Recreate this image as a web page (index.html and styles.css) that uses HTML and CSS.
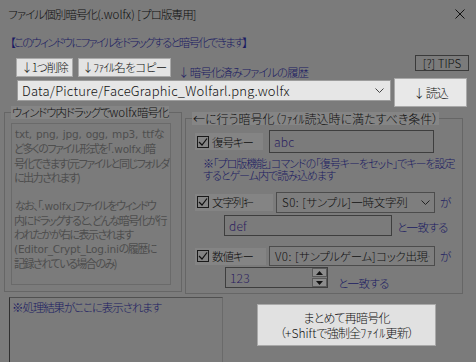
FILE: index.html
```html
<!DOCTYPE html>
<html lang="ja">
<head>
    <meta charset="UTF-8">
    <title>ファイル個別暗号化(.wolfx)</title>
    <link rel="stylesheet" href="styles.css">
</head>
<body>
    <div class="titlebar">
        <span class="title">ファイル個別暗号化<span class="lat">(.wolfx) [</span>プロ版専用<span class="lat">]</span></span>
        <svg class="close" width="10" height="10" viewBox="0 0 10 10"><path d="M0.5 0.5 L9.5 9.5 M9.5 0.5 L0.5 9.5" stroke="#111" stroke-width="1"/></svg>
    </div>

    <div class="notice">【このウィンドウにファイルをドラッグすると暗号化できます】</div>

    <div class="toolbar">
        <button class="btn btn-small">↓1つ削除</button>
        <button class="btn btn-copy">↓ﾌｧｲﾙ名をコピー</button>
        <span class="history-label">↓ 暗号化済みファイルの履歴</span>
        <button class="btn-tips">[?] TIPS</button>
    </div>

    <div class="path-row">
        <div class="combo combo-light">
            <span class="path">Data/Picture/FaceGraphic_Wolfarl.png.wolfx</span>
            <svg width="9" height="5" viewBox="0 0 9 5"><path d="M0.5 0.5 L4.5 4.5 L8.5 0.5" fill="none" stroke="#444"/></svg>
        </div>
        <button class="btn btn-load">↓ 読込</button>
    </div>

    <div class="main">
        <div class="group group-left">
            <div class="group-title">ウィンドウ内ドラッグで<span class="lat">wolfx</span>暗号化</div>
            <div class="help-box"> <span class="en">txt, png, jpg, ogg, mp3, ttf</span>な
ど多くのファイル形式を「<span class="en">.wolfx</span>」暗
号化できます(元ファイルと同じフォルダ
に出力されます)

 なお、「<span class="en">.wolfx</span>」ファイルをウィンドウ
内にドラッグすると、どんな暗号化が行
われたかが右に表示されます
<span class="en">(Editor_Crypt_Log.ini</span>の履歴に
記録されている場合のみ)</div>
        </div>

        <div class="group group-right">
            <div class="group-title group-title-wide">←に行う暗号化（ﾌｧｲﾙ読込時に満たすべき条件）</div>

            <div class="row row-key">
                <label class="check check-key"><span class="box"><svg width="10" height="10" viewBox="0 0 10 10"><path d="M1 5 L4 8 L9 1.5" fill="none" stroke="#111" stroke-width="1.2"/></svg></span>復号キー</label>
                <div class="field field-key">abc</div>
            </div>
            <div class="note">※「プロ版機能」コマンドの「復号キーをセット」でキーを設定<br>するとゲーム内で読み込めます</div>

            <div class="row row-str">
                <label class="check check-str"><span class="box"><svg width="10" height="10" viewBox="0 0 10 10"><path d="M1 5 L4 8 L9 1.5" fill="none" stroke="#111" stroke-width="1.2"/></svg></span>文字列ｷｰ</label>
                <div class="combo combo-dark combo-str">
                    <span><span class="lat">S0: [</span>サンプル<span class="lat">]</span>一時文字列</span>
                    <svg width="9" height="5" viewBox="0 0 9 5"><path d="M0.5 0.5 L4.5 4.5 L8.5 0.5" fill="none" stroke="#222"/></svg>
                </div>
                <span class="ga">が</span>
            </div>
            <div class="row row-match">
                <div class="field field-str">def</div>
                <span class="match">と一致する</span>
            </div>

            <div class="row row-num">
                <label class="check check-num"><span class="box"><svg width="10" height="10" viewBox="0 0 10 10"><path d="M1 5 L4 8 L9 1.5" fill="none" stroke="#111" stroke-width="1.2"/></svg></span>数値キー</label>
                <div class="combo combo-dark combo-num">
                    <span><span class="lat">V0: [</span>サンプルゲーム<span class="lat">]</span>コック出現</span>
                    <svg width="9" height="5" viewBox="0 0 9 5"><path d="M0.5 0.5 L4.5 4.5 L8.5 0.5" fill="none" stroke="#222"/></svg>
                </div>
                <span class="ga">が</span>
            </div>
            <div class="row row-spin">
                <div class="spinner">
                    <span class="spin-value">123</span>
                    <div class="spin-btns">
                        <span class="spin-btn"><svg width="7" height="4" viewBox="0 0 7 4"><path d="M3.5 0 L7 4 L0 4 Z" fill="#111"/></svg></span>
                        <span class="spin-btn"><svg width="7" height="4" viewBox="0 0 7 4"><path d="M0 0 L7 0 L3.5 4 Z" fill="#111"/></svg></span>
                    </div>
                </div>
                <span class="match match-num">と一致する</span>
            </div>
        </div>
    </div>

    <div class="bottom">
        <div class="result">※処理結果がここに表示されます</div>
        <button class="btn btn-big"><span class="big-line">まとめて再暗号化</span><span class="big-line">（<span class="lat">+Shift</span>で強制全<span class="kana">ﾌｧｲﾙ</span>更新）</span></button>
    </div>
</body>
</html>
```

FILE: styles.css
```css
body {
    margin: 0;
    width: 476px;
    height: 362px;
    overflow: hidden;
    background: #7b7b7b;
    font-family: "Noto Sans CJK JP", "Noto Sans", sans-serif;
    font-size: 11.5px;
    font-weight: 300;
    letter-spacing: -1.1px;
    font-feature-settings: "palt";
    color: #0e0e0e;
    white-space: nowrap;
}

.lat {
    letter-spacing: 0;
}

.kana {
    letter-spacing: 0.3px;
}

.titlebar {
    display: flex;
    justify-content: space-between;
    align-items: center;
    height: 28px;
    padding: 0 11px 0 8px;
}

.title {
    letter-spacing: -0.9px;
}

.notice {
    color: #1a1a62;
    margin: 7px 0 0 10px;
    height: 14px;
    line-height: 14px;
    letter-spacing: -1.8px;
}

.toolbar {
    display: flex;
    align-items: flex-start;
    height: 23px;
    margin-top: 6px;
    padding-left: 16px;
}

.btn {
    font-family: inherit;
    font-size: 11.5px;
    font-weight: 300;
    letter-spacing: -1px;
    font-feature-settings: "palt";
    color: #111;
    background: #e3e3e3;
    border: 1px solid #a9a9a9;
    padding: 0;
    margin: 0;
    white-space: nowrap;
}

.btn-small {
    width: 57px;
    height: 19px;
    margin-top: 3px;
    line-height: 17px;
}

.btn-copy {
    width: 93px;
    height: 19px;
    margin-top: 3px;
    margin-left: 5px;
    line-height: 17px;
    letter-spacing: -0.5px;
}

.history-label {
    color: #1a1a62;
    margin: 10px 0 0 7px;
    line-height: 14px;
}

.btn-tips {
    margin-left: auto;
    margin-right: 7px;
    width: 54px;
    height: 16px;
    padding: 0;
    font-family: inherit;
    font-size: 11.5px;
    font-weight: 300;
    line-height: 14px;
    color: #111;
    background: #7b7b7b;
    border: 1px solid #3a3a3a;
}

.path-row {
    display: flex;
    align-items: flex-start;
    height: 29px;
    padding-left: 17px;
}

.combo {
    display: flex;
    justify-content: space-between;
    align-items: center;
    box-sizing: border-box;
    padding: 0 6px 0 4px;
}

.combo-light {
    width: 374px;
    height: 21px;
    margin-top: 2px;
    background: #e6e6e6;
    border: 1px solid #9c9c9c;
}

.path {
    font-size: 13px;
    letter-spacing: 0.2px;
    color: #111;
}

.btn-load {
    width: 73px;
    height: 29px;
    margin-left: 3px;
    background: #e8e8e8;
    font-size: 12px;
}

.main {
    display: flex;
    align-items: flex-start;
    gap: 3px;
    padding-left: 4px;
    height: 187px;
}

/* group boxes: the border runs through the middle of the title */
.group {
    box-sizing: border-box;
    border: 1px solid #666;
}

.group-title {
    width: max-content;
    margin: -7px 0 0 6px;
    padding: 0 1px;
    line-height: 13px;
    background: #858585;
}

.group-right .group-title-wide {
    font-size: 12px;
    letter-spacing: 0;
}

.group-left {
    width: 178px;
    height: 180px;
    margin-top: 5px;
}

.help-box {
    box-sizing: border-box;
    width: 160px;
    height: 162px;
    margin: 4px 0 0 6px;
    padding: 2px 0 0 2px;
    border: 1px solid #6a6a6a;
    color: #4e4e4e;
    font-size: 11px;
    font-weight: 400;
    line-height: 14px;
    letter-spacing: -1.5px;
    white-space: pre;
    overflow: hidden;
}

.help-box .en {
    font-family: "DejaVu Sans", sans-serif;
    font-size: 10.5px;
    letter-spacing: -0.2px;
    word-spacing: 1px;
}

.group-right {
    width: 278px;
    height: 176px;
    margin-top: 11px;
}

.row {
    display: flex;
    align-items: center;
}

.row-key {
    margin-top: 5px;
    padding-left: 9px;
    height: 23px;
}

.check {
    display: flex;
    align-items: center;
    height: 17px;
    padding-left: 2px;
    background: #848484;
    box-sizing: border-box;
}

.box {
    display: flex;
    align-items: center;
    justify-content: center;
    width: 12px;
    height: 12px;
    box-sizing: border-box;
    border: 1px solid #1a1a1a;
    margin-right: 3px;
}

.check-key {
    width: 68px;
}

.check-str {
    width: 78px;
}

.check-num {
    width: 71px;
}

.field {
    box-sizing: border-box;
    border: 1px solid #3e3e3e;
    color: #2c2260;
    padding-left: 4px;
    display: flex;
    align-items: center;
    font-size: 12px;
    letter-spacing: 0.2px;
}

.field-key {
    width: 165px;
    height: 23px;
    margin-left: 6px;
}

.note {
    color: #1a1a62;
    margin: 4px 0 0 17px;
    font-size: 11px;
    line-height: 12px;
    letter-spacing: -1px;
}

.row-str {
    margin-top: 10px;
    padding-left: 9px;
    height: 22px;
}

.combo-dark {
    height: 21px;
    background: #7e7e7e;
    border: 1px solid #4c4c4c;
    padding: 0 4px 0 5px;
    color: #111;
    letter-spacing: -0.3px;
}

.combo-dark .lat {
    letter-spacing: 0.5px;
}

.combo-str {
    width: 159px;
    margin-left: 3px;
}

.ga {
    color: #1a1a62;
    margin-left: 5px;
}

.row-match {
    padding-left: 38px;
    height: 22px;
    margin-top: 1px;
}

.field-str {
    width: 168px;
    height: 21px;
}

.match {
    color: #1a1a62;
    margin-left: 5px;
    margin-top: 3px;
    letter-spacing: -0.6px;
}

.row-num {
    margin-top: 10px;
    padding-left: 9px;
    height: 20px;
}

.combo-num {
    width: 166px;
    height: 20px;
    margin-left: 3px;
}

.row-spin {
    padding-left: 39px;
    height: 21px;
    margin-top: 1px;
}

.spinner {
    display: flex;
    justify-content: space-between;
    box-sizing: border-box;
    width: 103px;
    height: 21px;
    border: 1px solid #3e3e3e;
    color: #2c2260;
    font-size: 12px;
    letter-spacing: 0.2px;
}

.spin-value {
    padding-left: 4px;
    line-height: 19px;
}

.spin-btns {
    display: flex;
    flex-direction: column;
    gap: 1px;
    width: 15px;
}

.spin-btn {
    display: flex;
    align-items: center;
    justify-content: center;
    height: 9px;
    background: #8c8c8c;
    border: 1px solid #5a5a5a;
    box-sizing: border-box;
}

.match-num {
    margin-left: 10px;
    margin-top: 10px;
}

.bottom {
    display: flex;
    align-items: flex-start;
    margin-top: 3px;
    padding-left: 9px;
}

.result {
    box-sizing: border-box;
    width: 214px;
    height: 70px;
    border-top: 1px solid #505050;
    border-left: 1px solid #303030;
    border-right: 1px solid #6a6a6a;
    color: #1a1a62;
    padding: 2px 0 0 2px;
    line-height: 14px;
}

.btn-big {
    display: flex;
    flex-direction: column;
    align-items: center;
    justify-content: center;
    width: 179px;
    height: 42px;
    margin: 7px 0 0 34px;
    background: #e1e1e1;
    font-size: 12px;
    letter-spacing: -0.8px;
}

.big-line {
    line-height: 15px;
    height: 15px;
}
```
